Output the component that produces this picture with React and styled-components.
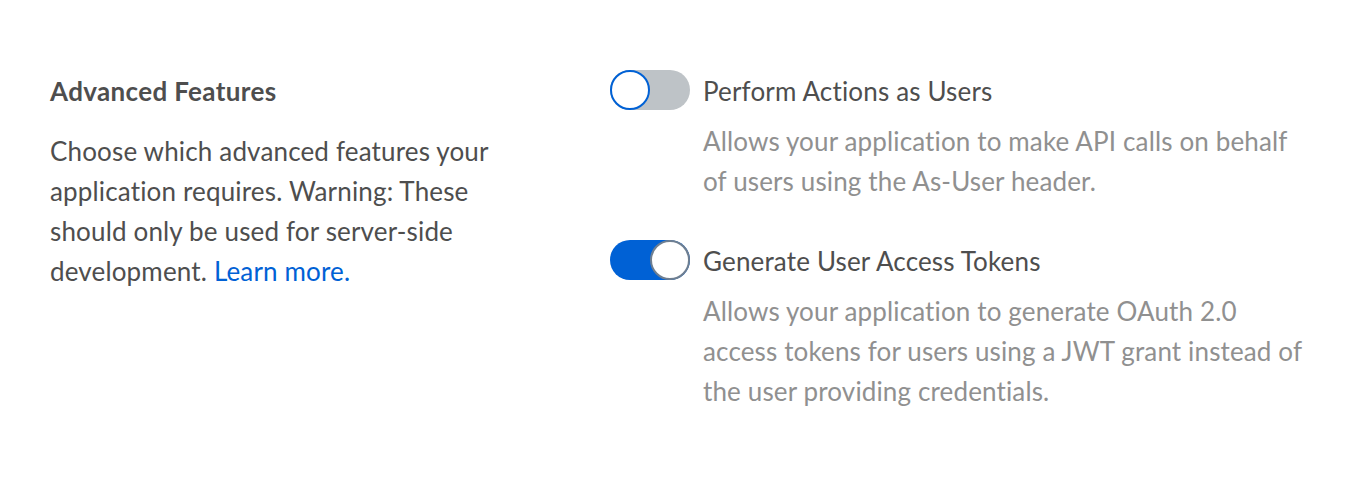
import React from "react";
import styled, { createGlobalStyle } from "styled-components";

const Global = createGlobalStyle`
  html, body { margin: 0; padding: 0; background: #fff; }
  body {
    font-family: Lato, "Open Sans", sans-serif;
    -webkit-font-smoothing: antialiased;
    font-variant-ligatures: none;
  }
`;

const Page = styled.div`
  display: grid;
  grid-template-columns: 560px 1fr;
  padding: 71px 0 0 50px;
  width: 1362px;
  height: 478px;
  box-sizing: border-box;
`;

const Intro = styled.section`
  display: flex;
  flex-direction: column;
  gap: 20px;
`;

const Heading = styled.h3`
  margin: 0;
  font-size: 26px;
  line-height: 40px;
  font-weight: 700;
  letter-spacing: 0.35px;
  color: #4e4e4e;
`;

const Body = styled.p`
  margin: 0;
  width: 460px;
  font-size: 26px;
  line-height: 40px;
  letter-spacing: 0.16px;
  color: #4e4e4e;
`;

const Link = styled.a`
  color: #0061d5;
  text-decoration: none;
`;

const Options = styled.div`
  display: flex;
  flex-direction: column;
  gap: 40px;
`;

const Option = styled.div`
  display: grid;
  grid-template-columns: 80px 1fr;
  column-gap: 13px;
`;

const Track = styled.span`
  position: relative;
  display: block;
  margin-top: -1px;
  width: 80px;
  height: 40px;
  border-radius: 20px;
  background: ${(p) => (p.$on ? "#0061d5" : "#bec3c7")};
`;

const Knob = styled.span`
  position: absolute;
  top: 0;
  left: ${(p) => (p.$on ? "40px" : "0")};
  width: 40px;
  height: 40px;
  box-sizing: border-box;
  border-radius: 50%;
  background: #fff;
  border: 2px solid ${(p) => (p.$on ? "#6f7f91" : "#0061d5")};
`;

const Text = styled.div`
  display: flex;
  flex-direction: column;
  gap: 10px;
`;

const Label = styled.div`
  font-size: 26px;
  line-height: 40px;
  letter-spacing: 0.16px;
  color: #4e4e4e;
`;

const Desc = styled.div`
  width: 640px;
  font-size: 26px;
  line-height: 40px;
  letter-spacing: 0.14px;
  color: #909090;
`;

const Toggle = ({ on }) => (
  <Track $on={on}>
    <Knob $on={on} />
  </Track>
);

export default function App() {
  return (
    <>
      <Global />
      <Page>
        <Intro>
          <Heading>Advanced Features</Heading>
          <Body>
            Choose which advanced features your application requires. Warning:
            These should only be used for server-side development.{" "}
            <Link href="#">Learn more.</Link>
          </Body>
        </Intro>
        <Options>
          <Option>
            <Toggle on={false} />
            <Text>
              <Label>Perform Actions as Users</Label>
              <Desc>
                Allows your application to make API calls on behalf
                <br />
                of users using the As-User header.
              </Desc>
            </Text>
          </Option>
          <Option>
            <Toggle on={true} />
            <Text>
              <Label>Generate User Access Tokens</Label>
              <Desc>
                Allows your application to generate OAuth 2.0
                <br />
                access tokens for users using a JWT grant instead of
                <br />
                the user providing credentials.
              </Desc>
            </Text>
          </Option>
        </Options>
      </Page>
    </>
  );
}
